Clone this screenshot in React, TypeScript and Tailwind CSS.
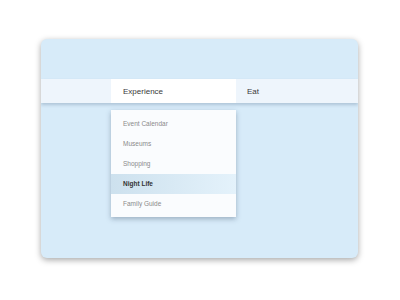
const items = ["Event Calendar", "Museums", "Shopping", "Night Life", "Family Guide"];

export default function App() {
  return (
    <div className="w-[400px] h-[300px] bg-white pt-[39px] pl-[41px] font-['Liberation_Sans',sans-serif]">
      <div className="w-[317px] h-[219px] rounded-[6px] bg-[#d7ebf9] shadow-[0_2px_6px_rgba(0,0,0,0.35)] overflow-hidden">
        <div className="h-[40px]" />
        <div className="flex h-[24px] bg-[#eef5fc] shadow-[0_2px_3px_rgba(80,110,140,0.3)]">
          <div className="w-[70px]" />
          <div className="w-[125px] bg-white flex items-center pl-[12px] pt-[1px] text-[8px] text-[#3a3a3a]">Experience</div>
          <div className="flex items-center pl-[11px] pt-[1px] text-[8px] text-[#3a3a3a]">Eat</div>
        </div>
        <div className="ml-[70px] mt-[7px] w-[125px] bg-[#fafcfe] pt-[4px] pb-[3px] shadow-[0_2px_5px_rgba(40,60,90,0.35)]">
          {items.map((item) =>
            item === "Night Life" ? (
              <div
                key={item}
                className="h-[20px] flex items-center pl-[12px] text-[6.5px] font-bold text-[#333] bg-gradient-to-r from-[#cde1ee] to-[#e4f2fb]"
              >
                {item}
              </div>
            ) : (
              <div key={item} className="h-[20px] flex items-center pl-[12px] text-[6.5px] text-[#8a8a8a]">
                {item}
              </div>
            )
          )}
        </div>
      </div>
    </div>
  );
}
